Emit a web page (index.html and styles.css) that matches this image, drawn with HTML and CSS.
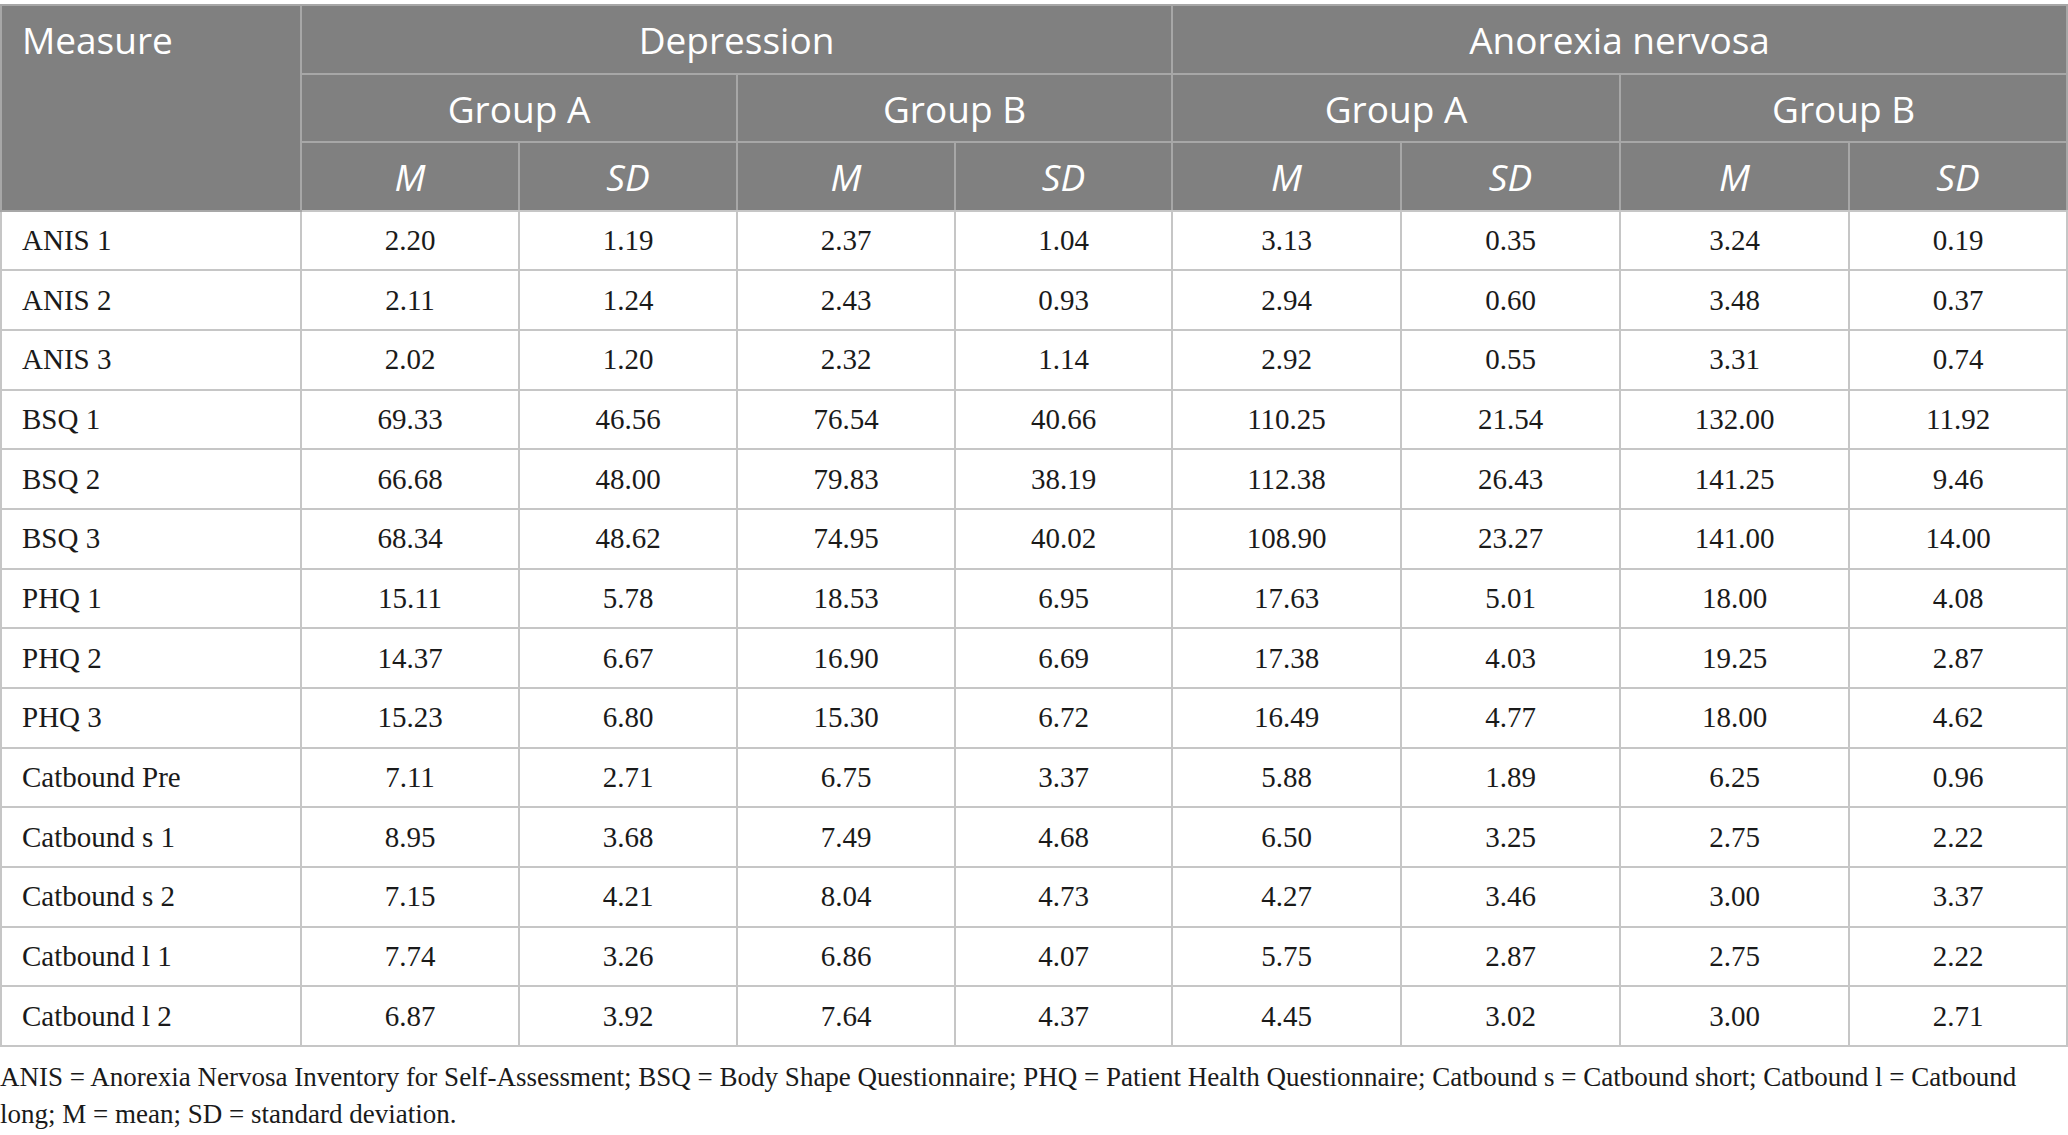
FILE: index.html
```html
<!DOCTYPE html>
<html>
<head>
<meta charset="utf-8">
<link rel="stylesheet" href="styles.css">
</head>
<body>
<div class="page">
<table class="data">
<colgroup>
<col class="c-measure"><col class="c-dep"><col class="c-dep"><col class="c-dep"><col class="c-dep2">
<col class="c-an"><col class="c-an2"><col class="c-an"><col class="c-an3">
</colgroup>
<thead>
<tr class="h1">
<th class="left" rowspan="3">Measure</th>
<th colspan="4">Depression</th>
<th colspan="4">Anorexia nervosa</th>
</tr>
<tr class="h2">
<th colspan="2">Group A</th>
<th colspan="2">Group B</th>
<th colspan="2">Group A</th>
<th colspan="2">Group B</th>
</tr>
<tr class="h3">
<th><i>M</i></th><th><i>SD</i></th><th><i>M</i></th><th><i>SD</i></th>
<th><i>M</i></th><th><i>SD</i></th><th><i>M</i></th><th><i>SD</i></th>
</tr>
</thead>
<tbody>
<tr><td class="left">ANIS 1</td><td>2.20</td><td>1.19</td><td>2.37</td><td>1.04</td><td>3.13</td><td>0.35</td><td>3.24</td><td>0.19</td></tr>
<tr><td class="left">ANIS 2</td><td>2.11</td><td>1.24</td><td>2.43</td><td>0.93</td><td>2.94</td><td>0.60</td><td>3.48</td><td>0.37</td></tr>
<tr><td class="left">ANIS 3</td><td>2.02</td><td>1.20</td><td>2.32</td><td>1.14</td><td>2.92</td><td>0.55</td><td>3.31</td><td>0.74</td></tr>
<tr><td class="left">BSQ 1</td><td>69.33</td><td>46.56</td><td>76.54</td><td>40.66</td><td>110.25</td><td>21.54</td><td>132.00</td><td>11.92</td></tr>
<tr><td class="left">BSQ 2</td><td>66.68</td><td>48.00</td><td>79.83</td><td>38.19</td><td>112.38</td><td>26.43</td><td>141.25</td><td>9.46</td></tr>
<tr><td class="left">BSQ 3</td><td>68.34</td><td>48.62</td><td>74.95</td><td>40.02</td><td>108.90</td><td>23.27</td><td>141.00</td><td>14.00</td></tr>
<tr><td class="left">PHQ 1</td><td>15.11</td><td>5.78</td><td>18.53</td><td>6.95</td><td>17.63</td><td>5.01</td><td>18.00</td><td>4.08</td></tr>
<tr><td class="left">PHQ 2</td><td>14.37</td><td>6.67</td><td>16.90</td><td>6.69</td><td>17.38</td><td>4.03</td><td>19.25</td><td>2.87</td></tr>
<tr><td class="left">PHQ 3</td><td>15.23</td><td>6.80</td><td>15.30</td><td>6.72</td><td>16.49</td><td>4.77</td><td>18.00</td><td>4.62</td></tr>
<tr><td class="left">Catbound Pre</td><td>7.11</td><td>2.71</td><td>6.75</td><td>3.37</td><td>5.88</td><td>1.89</td><td>6.25</td><td>0.96</td></tr>
<tr><td class="left">Catbound s 1</td><td>8.95</td><td>3.68</td><td>7.49</td><td>4.68</td><td>6.50</td><td>3.25</td><td>2.75</td><td>2.22</td></tr>
<tr><td class="left">Catbound s 2</td><td>7.15</td><td>4.21</td><td>8.04</td><td>4.73</td><td>4.27</td><td>3.46</td><td>3.00</td><td>3.37</td></tr>
<tr><td class="left">Catbound l 1</td><td>7.74</td><td>3.26</td><td>6.86</td><td>4.07</td><td>5.75</td><td>2.87</td><td>2.75</td><td>2.22</td></tr>
<tr><td class="left">Catbound l 2</td><td>6.87</td><td>3.92</td><td>7.64</td><td>4.37</td><td>4.45</td><td>3.02</td><td>3.00</td><td>2.71</td></tr>
</tbody>
</table>
<p class="note">ANIS = Anorexia Nervosa Inventory for Self-Assessment; BSQ = Body Shape Questionnaire; PHQ = Patient Health Questionnaire; Catbound s = Catbound short; Catbound l = Catbound long; M = mean; SD = standard deviation.</p>
</div>
</body>
</html>
```
FILE: styles.css
```css
html, body {
  margin: 0;
  padding: 0;
  background: #ffffff;
}
.page {
  width: 2068px;
  padding-top: 4px;
}
.data {
  width: 2067px;
  table-layout: fixed;
  border-collapse: collapse;
  border: 2px solid #c6c6c6;
  font-family: "Liberation Serif", "Times New Roman", serif;
  font-size: 29px;
  color: #1a1a1a;
}
.c-measure { width: 300px; }
.c-dep { width: 218px; }
.c-dep2 { width: 217px; }
.c-an { width: 229px; }
.c-an2 { width: 219px; }
.c-an3 { width: 218px; }
.data th {
  background: #808080;
  color: #ffffff;
  font-family: "Open Sans", "Noto Sans", sans-serif;
  font-weight: 400;
  font-size: 37px;
  border: 2px solid #a7a7a7;
  height: 65.5px;
  padding: 1px 0 0 0;
  text-align: center;
  vertical-align: middle;
}
.data th.left {
  text-align: left;
  vertical-align: top;
  padding-left: 20px;
  padding-top: 8px;
}
.data thead tr.h3 th {
  border-bottom: 2px solid #c6c6c6;
}
.data td {
  border: 2px solid #c6c6c6;
  height: 57.7px;
  padding: 0;
  text-align: center;
  vertical-align: middle;
}
.data td.left {
  text-align: left;
  padding-left: 20px;
}
.data i {
  font-style: italic;
}
.note {
  margin: 12px 0 0 0;
  font-family: "Liberation Serif", "Times New Roman", serif;
  font-size: 27px;
  line-height: 37px;
  color: #1a1a1a;
  width: 2050px;
}
```
